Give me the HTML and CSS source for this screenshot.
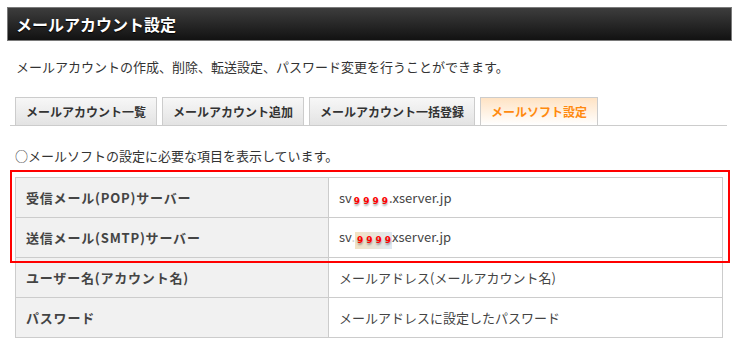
FILE: index.html
```html
<!DOCTYPE html>
<html lang="ja">
<head>
<meta charset="utf-8">
<title>メールアカウント設定</title>
<link rel="stylesheet" href="styles.css">
</head>
<body>
<div class="page">
  <h1 class="header">メールアカウント設定</h1>
  <p class="desc">メールアカウントの作成、削除、転送設定、パスワード変更を行うことができます。</p>
  <ul class="tabs">
    <li class="tab">メールアカウント一覧</li>
    <li class="tab">メールアカウント追加</li>
    <li class="tab">メールアカウント一括登録</li>
    <li class="tab active">メールソフト設定</li>
  </ul>
  <p class="notice">○メールソフトの設定に必要な項目を表示しています。</p>
  <div class="table-wrap">
    <table class="info">
      <tr>
        <th>受信メール(POP)サーバー</th>
        <td>sv<span class="mask"><span>9</span><span>9</span><span>9</span><span>9</span></span>.xserver.jp</td>
      </tr>
      <tr>
        <th>送信メール(SMTP)サーバー</th>
        <td>sv<span class="dot">.</span><span class="mask hl"><span>9</span><span>9</span><span>9</span><span>9</span></span>xserver.jp</td>
      </tr>
      <tr>
        <th>ユーザー名(アカウント名)</th>
        <td>メールアドレス(メールアカウント名)</td>
      </tr>
      <tr>
        <th>パスワード</th>
        <td>メールアドレスに設定したパスワード</td>
      </tr>
    </table>
    <div class="highlight-box"></div>
  </div>
</div>
</body>
</html>
```

FILE: styles.css
```css
html, body {
  margin: 0;
  padding: 0;
  background: #fff;
}
body {
  font-family: "Noto Sans CJK JP", "Noto Sans", sans-serif;
  color: #333;
}
.page {
  padding: 7px 8px 0 7px;
}
.header {
  margin: 0;
  height: 32px;
  line-height: 32px;
  border: 1px solid #7a7a7a;
  background: linear-gradient(#3d3d3d, #121212);
  color: #fff;
  font-size: 16px;
  font-weight: bold;
  padding-left: 8px;
  text-shadow: 0 1px 1px #000;
}
.desc {
  margin: 16px 0 0 0;
  padding-left: 9px;
  font-size: 13px;
  line-height: 20px;
  color: #333;
}
.tabs {
  list-style: none;
  margin: 20px 3px 0 3px;
  padding: 0 0 0 5px;
  display: flex;
  gap: 5px;
  border-bottom: 1px solid #cccccc;
  width: 712px;
}
.tab {
  height: 27px;
  line-height: 28px;
  padding: 0 10px;
  border: 1px solid #cccccc;
  border-bottom: none;
  background: linear-gradient(#f7f7f7, #e3e3e3);
  font-size: 12px;
  font-weight: bold;
  color: #333;
  white-space: nowrap;
}
.tab.active {
  background: linear-gradient(#ffe3c4, #ffffff);
  color: #ff8a0f;
}
.notice {
  margin: 20px 0 0 0;
  padding-left: 8px;
  font-size: 13px;
  line-height: 20px;
  color: #333;
}
.table-wrap {
  position: relative;
  margin: 11px 0 0 8px;
  width: 708px;
}
.info {
  border-collapse: collapse;
  width: 708px;
  font-size: 13px;
}
.info th,
.info td {
  border: 1px solid #cccccc;
  height: 40px;
  padding: 0 10px;
  text-align: left;
  line-height: 20px;
  box-sizing: border-box;
}
.info th {
  width: 313px;
  background: #f1f1f1;
  font-weight: bold;
  color: #444;
  letter-spacing: 0.8px;
}
.info td {
  background: #fff;
  font-weight: normal;
  color: #444;
}
.dot {
  color: #ccc;
}
.mask {
  display: inline-flex;
  gap: 3px;
  padding: 0 1px 0 2px;
  vertical-align: -1px;
}
.mask span {
  color: #f00;
  font-size: 9px;
  font-weight: bold;
  line-height: 12px;
  text-shadow: 0 2px 2px rgba(0, 0, 0, 0.35);
  font-family: "DejaVu Sans", sans-serif;
}
.mask.hl {
  background: linear-gradient(to right, #f2e2c4, #e9e3d6, #dfeaf3);
  line-height: 18px;
  padding-top: 2px;
  padding-bottom: 3px;
}
.highlight-box {
  position: absolute;
  left: -5px;
  top: -7px;
  width: 716px;
  height: 89px;
  border: 2px solid #ff0000;
  pointer-events: none;
}
```
